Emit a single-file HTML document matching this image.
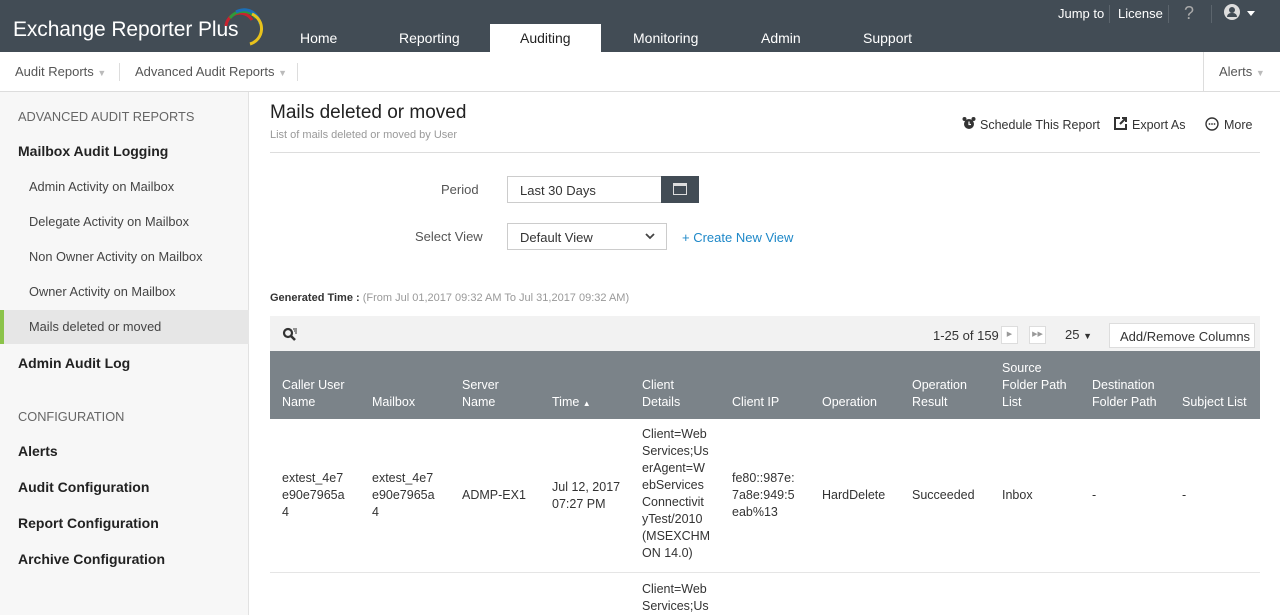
<!DOCTYPE html>
<html><head><meta charset="utf-8"><style>
*{box-sizing:border-box;margin:0;padding:0}
body{width:1280px;height:615px;overflow:hidden;font-family:"Liberation Sans",sans-serif;font-size:13px;color:#333;background:#fff;position:relative}
.a{position:absolute;white-space:nowrap}
#hd{position:absolute;left:0;top:0;width:1280px;height:52px;background:#424c55}
.nav{color:#fff;font-size:14px;top:30px}
.side{font-size:12.8px;color:#444}
.sb{font-size:14px;font-weight:bold;color:#222}
.th{color:#fff;font-size:12.5px;line-height:17px}
.td{font-size:12.5px;line-height:17px;color:#333;white-space:normal}
</style></head><body>
<div id="hd"></div>
<div class="a" style="left:13px;top:18px;color:#fff;font-size:21px;letter-spacing:-0.1px">Exchange Reporter Plus</div>
<svg class="a" style="left:222px;top:8px" width="42" height="38" viewBox="0 0 42 38"><path d="M4 18 A14 14 0 0 1 30 12" stroke="#c8222f" stroke-width="3" fill="none"/><path d="M8 10 A16 16 0 0 1 34 10" stroke="#2d9a3b" stroke-width="3" fill="none"/><path d="M14 4 A16 16 0 0 1 38 16" stroke="#1b6fb7" stroke-width="3" fill="none"/><path d="M30 6 A16 16 0 0 1 28 36" stroke="#e8c21c" stroke-width="3" fill="none"/></svg>
<div class="a nav" style="left:300px">Home</div>
<div class="a nav" style="left:399px">Reporting</div>
<div class="a" style="left:490px;top:24px;width:111px;height:28px;background:#fff"></div>
<div class="a nav" style="left:520px;color:#222">Auditing</div>
<div class="a nav" style="left:633px">Monitoring</div>
<div class="a nav" style="left:761px">Admin</div>
<div class="a nav" style="left:863px">Support</div>
<div class="a" style="left:1058px;top:6px;color:#fff;font-size:13px">Jump to</div>
<div class="a" style="left:1109px;top:5px;width:1px;height:18px;background:#5c656d"></div>
<div class="a" style="left:1118px;top:6px;color:#fff;font-size:13px">License</div>
<div class="a" style="left:1168px;top:5px;width:1px;height:18px;background:#5c656d"></div>
<div class="a" style="left:1184px;top:3px;color:#aaa;font-size:18px">?</div>
<div class="a" style="left:1211px;top:5px;width:1px;height:18px;background:#5c656d"></div>
<div class="a" style="left:1224px;top:4px;width:16px;height:16px;border-radius:50%;background:#ddd"></div>
<div class="a" style="left:1229px;top:7px;width:6px;height:6px;border-radius:50%;background:#424c55"></div>
<div class="a" style="left:1227px;top:13px;width:10px;height:4px;border-radius:4px 4px 0 0;background:#424c55"></div>
<div class="a" style="left:1247px;top:11px;border:4px solid transparent;border-top:5px solid #fff"></div>

<div class="a" style="left:0;top:91px;width:1280px;height:1px;background:#ddd"></div>
<div class="a" style="left:15px;top:64px;color:#555">Audit Reports <span style="color:#bbb;font-size:9px">▼</span></div>
<div class="a" style="left:119px;top:63px;width:1px;height:18px;background:#ddd"></div>
<div class="a" style="left:135px;top:64px;color:#555">Advanced Audit Reports <span style="color:#bbb;font-size:9px">▼</span></div>
<div class="a" style="left:297px;top:63px;width:1px;height:18px;background:#ddd"></div>
<div class="a" style="left:1203px;top:52px;width:1px;height:39px;background:#ddd"></div>
<div class="a" style="left:1219px;top:64px;color:#555">Alerts <span style="color:#bbb;font-size:9px">▼</span></div>

<div class="a" style="left:0;top:92px;width:249px;height:523px;background:#f7f7f7;border-right:1px solid #e2e2e2"></div>
<div class="a side" style="left:18px;top:109px;color:#666">ADVANCED AUDIT REPORTS</div>
<div class="a sb" style="left:18px;top:143px">Mailbox Audit Logging</div>
<div class="a side" style="left:29px;top:179px">Admin Activity on Mailbox</div>
<div class="a side" style="left:29px;top:214px">Delegate Activity on Mailbox</div>
<div class="a side" style="left:29px;top:249px">Non Owner Activity on Mailbox</div>
<div class="a side" style="left:29px;top:284px">Owner Activity on Mailbox</div>
<div class="a" style="left:0;top:310px;width:249px;height:34px;background:#e6e6e6;border-left:4px solid #8bc34a"></div>
<div class="a side" style="left:29px;top:319px">Mails deleted or moved</div>
<div class="a sb" style="left:18px;top:355px">Admin Audit Log</div>
<div class="a side" style="left:18px;top:409px;color:#666">CONFIGURATION</div>
<div class="a sb" style="left:18px;top:443px">Alerts</div>
<div class="a sb" style="left:18px;top:479px">Audit Configuration</div>
<div class="a sb" style="left:18px;top:515px">Report Configuration</div>
<div class="a sb" style="left:18px;top:551px">Archive Configuration</div>

<div class="a" style="left:270px;top:102px;font-size:19px;color:#222">Mails deleted or moved</div>
<div class="a" style="left:270px;top:129px;font-size:11px;color:#999">List of mails deleted or moved by User</div>
<svg class="a" style="left:962px;top:116px" width="14" height="14" viewBox="0 0 14 14"><circle cx="7" cy="8" r="5" fill="#333"/><circle cx="2.5" cy="3" r="2" fill="#333"/><circle cx="11.5" cy="3" r="2" fill="#333"/><path d="M7 5.5V8.5H9" stroke="#fff" stroke-width="1.2" fill="none"/></svg>
<div class="a" style="left:980px;top:118px;font-size:12.5px">Schedule This Report</div>
<svg class="a" style="left:1114px;top:117px" width="13" height="13" viewBox="0 0 13 13"><path d="M6 1H1V12H12V7" stroke="#333" stroke-width="2" fill="none"/><path d="M6 7L12 1M8 1H12V5" stroke="#333" stroke-width="2" fill="none"/></svg>
<div class="a" style="left:1132px;top:118px;font-size:12.5px">Export As</div>
<svg class="a" style="left:1205px;top:117px" width="14" height="14" viewBox="0 0 14 14"><circle cx="7" cy="7" r="6" stroke="#333" stroke-width="1.4" fill="none"/><circle cx="4.5" cy="7" r="0.9" fill="#333"/><circle cx="7" cy="7" r="0.9" fill="#333"/><circle cx="9.5" cy="7" r="0.9" fill="#333"/></svg>
<div class="a" style="left:1224px;top:118px;font-size:12.5px">More</div>
<div class="a" style="left:270px;top:152px;width:990px;height:1px;background:#ddd"></div>

<div class="a" style="left:441px;top:182px;color:#555">Period</div>
<div class="a" style="left:507px;top:176px;width:155px;height:27px;border:1px solid #ccc;padding:6px 12px">Last 30 Days</div>
<div class="a" style="left:661px;top:176px;width:38px;height:27px;background:#424c55"></div>
<div class="a" style="left:673px;top:183px;width:14px;height:12px;border:1.5px solid #ddd;border-top-width:3px"></div>
<div class="a" style="left:415px;top:229px;color:#555">Select View</div>
<div class="a" style="left:507px;top:223px;width:160px;height:27px;border:1px solid #ccc;padding:6px 12px">Default View</div>
<svg class="a" style="left:645px;top:233px" width="10" height="7" viewBox="0 0 10 7"><path d="M1 1L5 5L9 1" stroke="#444" stroke-width="1.8" fill="none"/></svg>
<div class="a" style="left:682px;top:230px;color:#1e88c8">+ Create New View</div>

<div class="a" style="left:270px;top:292px;font-size:11px;font-weight:bold;color:#333">Generated Time : <span style="font-weight:normal;color:#999">(From Jul 01,2017 09:32 AM To Jul 31,2017 09:32 AM)</span></div>

<div class="a" style="left:270px;top:316px;width:990px;height:35px;background:#f2f2f2"></div>
<svg class="a" style="left:282px;top:327px" width="16" height="15" viewBox="0 0 16 15"><circle cx="6" cy="6" r="4" stroke="#333" stroke-width="2.2" fill="none"/><path d="M9 9L13 13" stroke="#333" stroke-width="2.6"/><path d="M11 2H15M12 4H15M13 6H15" stroke="#333" stroke-width="1"/></svg>
<div class="a" style="left:933px;top:328px">1-25 of 159</div>
<div class="a" style="left:1001px;top:326px;width:17px;height:18px;background:#fff;border:1px solid #ddd;font-size:7px;text-align:center;line-height:16px;color:#999">▶</div>
<div class="a" style="left:1029px;top:326px;width:17px;height:18px;background:#fff;border:1px solid #ddd;font-size:7px;text-align:center;line-height:16px;color:#999">▶▶</div>
<div class="a" style="left:1065px;top:327px">25 <span style="font-size:9px">▼</span></div>
<div class="a" style="left:1109px;top:323px;width:146px;height:25px;background:#fff;border:1px solid #ddd;padding:5px 10px">Add/Remove Columns</div>

<div class="a" style="left:270px;top:351px;width:990px;height:68px;background:#7b8389"></div>
<div class="a th" style="left:282px;top:377px">Caller User<br>Name</div>
<div class="a th" style="left:372px;top:394px">Mailbox</div>
<div class="a th" style="left:462px;top:377px">Server<br>Name</div>
<div class="a th" style="left:552px;top:394px">Time <span style="font-size:8px">▲</span></div>
<div class="a th" style="left:642px;top:377px">Client<br>Details</div>
<div class="a th" style="left:732px;top:394px">Client IP</div>
<div class="a th" style="left:822px;top:394px">Operation</div>
<div class="a th" style="left:912px;top:377px">Operation<br>Result</div>
<div class="a th" style="left:1002px;top:360px">Source<br>Folder Path<br>List</div>
<div class="a th" style="left:1092px;top:377px">Destination<br>Folder Path</div>
<div class="a th" style="left:1182px;top:394px">Subject List</div>

<div class="a td" style="left:282px;top:470px;width:70px">extest_4e7<br>e90e7965a<br>4</div>
<div class="a td" style="left:372px;top:470px;width:70px">extest_4e7<br>e90e7965a<br>4</div>
<div class="a td" style="left:462px;top:487px">ADMP-EX1</div>
<div class="a td" style="left:552px;top:479px">Jul 12, 2017<br>07:27 PM</div>
<div class="a td" style="left:642px;top:426px">Client=Web<br>Services;Us<br>erAgent=W<br>ebServices<br>Connectivit<br>yTest/2010<br>(MSEXCHM<br>ON 14.0)</div>
<div class="a td" style="left:732px;top:470px">fe80::987e:<br>7a8e:949:5<br>eab%13</div>
<div class="a td" style="left:822px;top:487px">HardDelete</div>
<div class="a td" style="left:912px;top:487px">Succeeded</div>
<div class="a td" style="left:1002px;top:487px">Inbox</div>
<div class="a td" style="left:1092px;top:487px">-</div>
<div class="a td" style="left:1182px;top:487px">-</div>
<div class="a" style="left:270px;top:572px;width:990px;height:1px;background:#e5e5e5"></div>
<div class="a td" style="left:642px;top:581px">Client=Web<br>Services;Us</div>
</body></html>
